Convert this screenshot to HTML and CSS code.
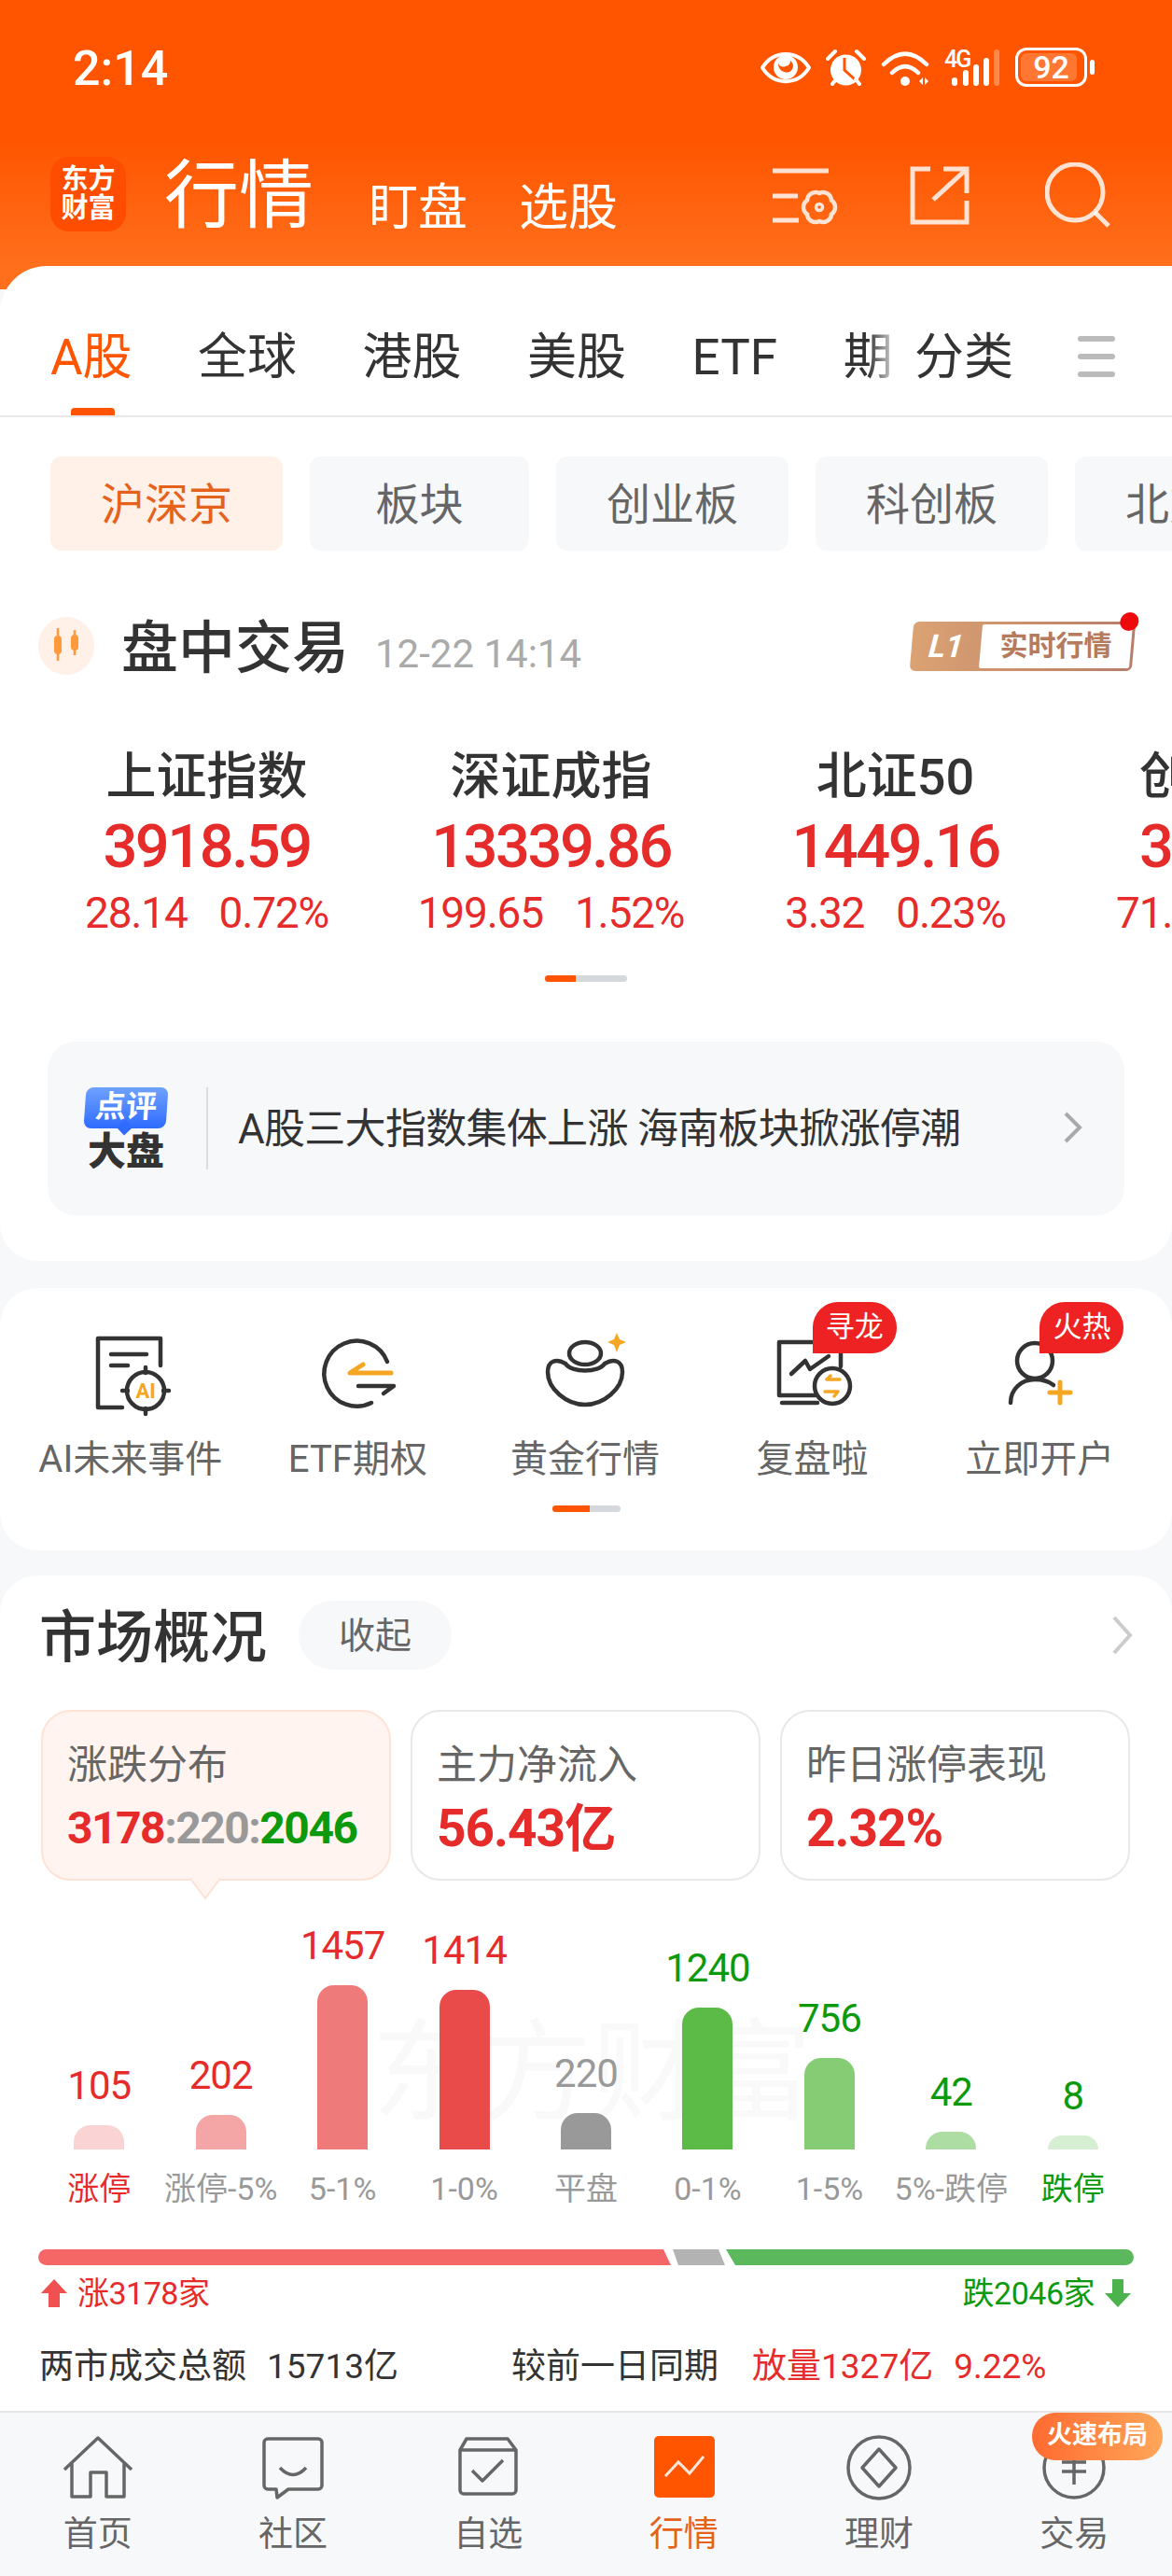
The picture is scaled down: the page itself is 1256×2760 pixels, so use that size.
FILE: index.html
```html
<!DOCTYPE html>
<html lang="zh-CN">
<head>
    <meta charset="UTF-8">
    <title>行情</title>
    <link rel="stylesheet" href="styles.css">
</head>
<body>
    <div class="phone">
        <header class="top">
            <div class="status-bar">
                <span class="clock">2:14</span>
                <div class="status-icons">
                    <svg class="si-eye" viewBox="0 0 54 37"><path d="M2 18.5C14 -1 40 -1 52 18.5C40 38 14 38 2 18.5Z" fill="none" stroke="#fff" stroke-width="4"/><circle cx="27" cy="18" r="13" fill="#fff"/><path d="M19 14a9 9 0 0 0 12 9a7 7 0 0 0 1 -12a6 6 0 0 1 -5 6a6 6 0 0 1 -8 -3Z" fill="#ff5500"/></svg>
                    <svg class="si-alarm" viewBox="0 0 43 40"><circle cx="21.5" cy="23" r="16.5" fill="#fff"/><path d="M20 10V23L31 33" fill="none" stroke="#ff5500" stroke-width="3"/><path d="M2 11L10 3M41 11L33 3M7 38L11 33M36 38L32 33" fill="none" stroke="#fff" stroke-width="4" stroke-linecap="round"/></svg>
                    <svg class="si-wifi" viewBox="0 0 52 40"><path d="M3 17Q26 -6 49 17M12 26Q26 12 40 26" fill="none" stroke="#fff" stroke-width="4.5" stroke-linecap="round"/><circle cx="26" cy="35" r="5" fill="#fff"/><path d="M41 35L45 31V39ZM47 31L51 35L47 39Z" fill="#fff"/></svg>
                    <svg class="si-signal" viewBox="0 0 59 40"><text x="0" y="20" class="si-4g">4G</text><rect x="8" y="31" width="6" height="9" rx="3" fill="#fff"/><rect x="20" y="23" width="6" height="17" rx="3" fill="#fff"/><rect x="31" y="17" width="6" height="23" rx="3" fill="#fff"/><rect x="42" y="10" width="6" height="30" rx="3" fill="#fff"/><rect x="53" y="1" width="6" height="39" rx="3" fill="#fff" opacity=".3"/></svg>
                    <div class="battery"><span class="battery-fill"></span><span class="battery-num">92</span></div>
                </div>
            </div>
            <div class="nav-row">
                <div class="logo">东方<br>财富</div>
                <h1 class="page-title">行情</h1>
                <span class="nav-link nav-first">盯盘</span>
                <span class="nav-link">选股</span>
                <div class="nav-actions">
                    <svg class="na-gear" viewBox="0 0 70 64"><path d="M0 4H60M0 31H27M0 57H28" stroke-width="5"/><path d="M50 28A9 9 0 0 1 63 35.5A9 9 0 0 1 63 50.5A9 9 0 0 1 50 58A9 9 0 0 1 37 50.5A9 9 0 0 1 37 35.5A9 9 0 0 1 50 28Z" stroke-width="4.5"/><circle cx="50" cy="43" r="3.5" stroke-width="3.5"/></svg>
                    <svg class="na-share" viewBox="0 0 64 64"><path d="M22 4H3V61H61V38M36 4H61V30M61 4L25 37" stroke-width="5"/></svg>
                    <svg class="na-search" viewBox="0 0 70 70"><circle cx="32" cy="32" r="30" stroke-width="5"/><path d="M53 53L68 68" stroke-width="5"/></svg>
                </div>
            </div>
        </header>

        <section class="card card-quotes">
            <div class="tabs">
                <div class="tabs-scroll">
                    <span class="tab tab-on">A股</span>
                    <span class="tab">全球</span>
                    <span class="tab">港股</span>
                    <span class="tab">美股</span>
                    <span class="tab">ETF</span>
                    <span class="tab">期</span>
                </div>
                <div class="tabs-end">
                    <span class="tab">分类</span>
                    <span class="tabs-menu"><i></i><i></i><i></i></span>
                </div>
            </div>

            <div class="subtabs">
                <span class="subtab subtab-on">沪深京</span>
                <span class="subtab subtab-short">板块</span>
                <span class="subtab">创业板</span>
                <span class="subtab">科创板</span>
                <span class="subtab">北交所</span>
            </div>

            <div class="trade-head">
                <svg class="candle-icon" viewBox="0 0 60 62"><ellipse cx="30" cy="31" rx="30" ry="31" fill="#fff0e8"/><path d="M21 12V47M39 14V41" stroke="#ff9a3c" stroke-width="2.5"/><rect x="17" y="20" width="8" height="20" rx="4" fill="#ff9a3c"/><rect x="35" y="19" width="8" height="17" rx="4" fill="#ff9a3c"/></svg>
                <h2 class="trade-title">盘中交易</h2>
                <span class="trade-time">12-22 14:14</span>
                <div class="l1-badge">
                    <span class="l1-left"><b>L1</b></span>
                    <span class="l1-right"><b>实时行情</b></span>
                    <i class="l1-dot"></i>
                </div>
            </div>

            <div class="indexes">
                <div class="index">
                    <div class="index-name">上证指数</div>
                    <div class="index-value">3918.59</div>
                    <div class="index-change"><span>28.14</span><span>0.72%</span></div>
                </div>
                <div class="index">
                    <div class="index-name">深证成指</div>
                    <div class="index-value">13339.86</div>
                    <div class="index-change"><span>199.65</span><span>1.52%</span></div>
                </div>
                <div class="index">
                    <div class="index-name">北证50</div>
                    <div class="index-value">1449.16</div>
                    <div class="index-change"><span>3.32</span><span>0.23%</span></div>
                </div>
                <div class="index index-cut">
                    <div class="index-name">创业板指</div>
                    <div class="index-value">3</div>
                    <div class="index-change index-change-cut"><span>71.</span></div>
                </div>
            </div>
            <div class="pager pager-wide"><i></i></div>

            <div class="comment">
                <div class="comment-logo">
                    <span class="comment-bubble"><b>点评</b></span>
                    <span class="comment-big">大盘</span>
                </div>
                <span class="comment-text">A股三大指数集体上涨 海南板块掀涨停潮</span>
                <svg class="comment-arrow" viewBox="0 0 22 36"><path d="M3 3L18 18L3 33" fill="none" stroke="#aaa" stroke-width="4"/></svg>
            </div>
        </section>

        <section class="card card-shortcuts">
            <div class="shortcuts">
                <div class="shortcut">
                    <svg viewBox="0 0 90 90" class="sc-icon"><path d="M36 80H10V6H77V35M24 23H62M24 35H42" class="ln"/><circle cx="61" cy="62" r="20" class="ln"/><path d="M61 37V43M61 81V87M36 62H42M80 62H86" class="ln"/><text x="61" y="70" class="sc-ai">AI</text></svg>
                    <span class="shortcut-label">AI未来事件</span>
                </div>
                <div class="shortcut">
                    <svg viewBox="0 0 90 90" class="sc-icon"><path d="M77 31A35 35 0 1 0 60 75M46 57H84L73 65" class="ln"/><path d="M81 43H37L51 34" class="ln-gold"/></svg>
                    <span class="shortcut-label">ETF期权</span>
                </div>
                <div class="shortcut">
                    <svg viewBox="0 0 90 90" class="sc-icon"><path d="M24 33C14 27 5 30 5 42C5 60 25 77 45 77C65 77 85 60 85 42C85 30 76 27 66 33C60 43 30 43 24 33Z" class="ln"/><ellipse cx="45" cy="22" rx="17" ry="12" class="ln"/><path d="M79 0L82 7L89 10L82 13L79 21L76 13L69 10L76 7Z" fill="#f5a623"/></svg>
                    <span class="shortcut-label">黄金行情</span>
                </div>
                <div class="shortcut">
                    <svg viewBox="0 0 90 90" class="sc-icon"><path d="M48 67H9V10H75V36M12 75H50M22 44L37 30L42 39L62 25" class="ln"/><circle cx="66" cy="57" r="19" class="ln"/><path d="M74 50H60L64 46M58 63H72L68 68" class="ln-gold ln-thin"/></svg>
                    <span class="shortcut-label">复盘啦</span>
                    <span class="flag">寻龙</span>
                </div>
                <div class="shortcut">
                    <svg viewBox="0 0 90 90" class="sc-icon"><circle cx="40" cy="30" r="19" class="ln"/><path d="M14 75C14 60 26 50 40 50C48 50 55 52 60 56" class="ln"/><path d="M67 53V75M56 64H78" class="ln-gold"/></svg>
                    <span class="shortcut-label">立即开户</span>
                    <span class="flag">火热</span>
                </div>
            </div>
            <div class="pager pager-small"><i></i></div>
        </section>

        <section class="card card-market">
            <div class="market-head">
                <h2 class="market-title">市场概况</h2>
                <span class="collapse">收起</span>
                <svg class="market-arrow" viewBox="0 0 24 44"><path d="M3 3L20 22L3 41" fill="none" stroke="#ccc" stroke-width="4"/></svg>
            </div>

            <div class="stats">
                <div class="stat stat-on">
                    <div class="stat-label">涨跌分布</div>
                    <div class="stat-value"><span class="red">3178</span><span class="grey">:220:</span><span class="green">2046</span></div>
                </div>
                <div class="stat">
                    <div class="stat-label">主力净流入</div>
                    <div class="stat-value stat-value-big"><span class="red">56.43亿</span></div>
                </div>
                <div class="stat">
                    <div class="stat-label">昨日涨停表现</div>
                    <div class="stat-value stat-value-big"><span class="red">2.32%</span></div>
                </div>
            </div>

            <div class="chart">
                <div class="chart-mark">东方财富</div>
                <div class="chart-col"><span class="chart-num red">105</span><i class="bar" style="height:26px;background:#fad4d4"></i></div>
                <div class="chart-col"><span class="chart-num red">202</span><i class="bar" style="height:37px;background:#f4a5a5"></i></div>
                <div class="chart-col"><span class="chart-num red">1457</span><i class="bar" style="height:176px;background:#ef7a7a"></i></div>
                <div class="chart-col"><span class="chart-num red">1414</span><i class="bar" style="height:171px;background:#e94b4b"></i></div>
                <div class="chart-col"><span class="chart-num grey">220</span><i class="bar" style="height:39px;background:#999"></i></div>
                <div class="chart-col"><span class="chart-num green">1240</span><i class="bar" style="height:152px;background:#5cba47"></i></div>
                <div class="chart-col"><span class="chart-num green">756</span><i class="bar" style="height:98px;background:#85cc75"></i></div>
                <div class="chart-col"><span class="chart-num green">42</span><i class="bar" style="height:19px;background:#aedda3"></i></div>
                <div class="chart-col"><span class="chart-num green">8</span><i class="bar" style="height:15px;background:#d6eed1"></i></div>
            </div>
            <div class="chart-labels">
                <span class="red">涨停</span>
                <span>涨停-5%</span>
                <span>5-1%</span>
                <span>1-0%</span>
                <span>平盘</span>
                <span>0-1%</span>
                <span>1-5%</span>
                <span>5%-跌停</span>
                <span class="green">跌停</span>
            </div>

            <div class="ratio">
                <i class="ratio-up"></i>
                <i class="ratio-flat"></i>
                <i class="ratio-down"></i>
            </div>
            <div class="ratio-legend">
                <span class="legend-item red">
                    <svg viewBox="0 0 30 30" class="legend-arrow"><path d="M15 0L29 15H21V30H9V15H1Z" fill="#f05050"/></svg>
                    涨3178家
                </span>
                <span class="legend-item green">
                    跌2046家
                    <svg viewBox="0 0 30 30" class="legend-arrow"><path d="M9 0H21V15H29L15 30L1 15H9Z" fill="#4cb24c"/></svg>
                </span>
            </div>

            <div class="summary">
                <span class="summary-left"><span>两市成交总额</span><span class="summary-num">15713亿</span></span>
                <span>较前一日同期</span>
                <span class="red summary-vol">放量1327亿</span>
                <span class="red summary-num">9.22%</span>
            </div>
        </section>

        <nav class="tabbar">
            <div class="tabbar-item">
                <svg viewBox="0 0 76 70" class="tb-icon"><path d="M2 37L38 3L74 37M10 29V66H30V40H47V66H66V29" class="tb-ln"/></svg>
                <span>首页</span>
            </div>
            <div class="tabbar-item">
                <svg viewBox="0 0 70 70" class="tb-icon"><path d="M17 58H8A4 4 0 0 1 4 54V8A4 4 0 0 1 8 4H62A4 4 0 0 1 66 8V54A4 4 0 0 1 62 58H30L18 67Z" class="tb-ln"/><path d="M21 35Q35 50 49 35" class="tb-ln"/></svg>
                <span>社区</span>
            </div>
            <div class="tabbar-item">
                <svg viewBox="0 0 70 70" class="tb-icon"><path d="M5 16L12 4H56L65 16V59A4 4 0 0 1 61 63H9A4 4 0 0 1 5 59ZM5 16H65M18 38L29 49L51 27" class="tb-ln"/></svg>
                <span>自选</span>
            </div>
            <div class="tabbar-item tabbar-on">
                <svg viewBox="0 0 70 70" class="tb-icon"><rect x="3" y="1" width="65" height="66" rx="5" fill="#ff5500"/><path d="M15 44L29 29L41 41L56 23" fill="none" stroke="#ffe6d8" stroke-width="3"/></svg>
                <span>行情</span>
            </div>
            <div class="tabbar-item">
                <svg viewBox="0 0 70 70" class="tb-icon"><circle cx="35" cy="35" r="33" class="tb-ln"/><path d="M35 15L53 35L35 55L17 35Z" class="tb-ln"/></svg>
                <span>理财</span>
            </div>
            <div class="tabbar-item">
                <svg viewBox="0 0 70 70" class="tb-icon"><circle cx="35" cy="35" r="32" class="tb-ln"/><path d="M22 29H48M22 39H48M35 26V53" class="tb-ln"/></svg>
                <span>交易</span>
            </div>
            <span class="promo">火速布局</span>
        </nav>
    </div>
</body>
</html>
```

FILE: styles.css
```css
* {
    box-sizing: border-box;
}

body {
    margin: 0;
    background: #f7f8fa;
    font-family: Roboto, "Noto Sans CJK SC", sans-serif;
    color: #333;
}

h1, h2 {
    margin: 0;
}

.phone {
    width: 1256px;
    height: 2760px;
    overflow: hidden;
    position: relative;
    background: #f7f8fa;
}

.red { color: #e62b2b; }
.green { color: #0c9a0c; }
.grey { color: #999; }

/* orange top */
.top {
    height: 310px;
    margin-bottom: -25px;
    background: linear-gradient(180deg, #ff5500 0, #ff5500 150px, #ff6f1c 285px);
    color: #fff;
}

.status-bar {
    height: 146px;
    display: flex;
    align-items: center;
    padding: 0 91px 0 78px;
}

.clock {
    font-size: 52px;
    font-weight: 500;
}

.status-icons {
    margin-left: auto;
    display: flex;
    align-items: center;
    margin-top: -2px;
}

.si-eye { width: 54px; height: 37px; margin-right: 16px; }
.si-alarm { width: 43px; height: 40px; margin-right: 16px; }
.si-wifi { width: 52px; height: 40px; margin-right: 16px; }
.si-signal { width: 59px; height: 40px; margin-right: 17px; overflow: visible; }

.si-4g {
    font-size: 25px;
    font-weight: 500;
    fill: #fff;
    letter-spacing: -2px;
}

.battery {
    width: 77px;
    height: 42px;
    border: 3px solid #fff;
    border-radius: 12px;
    position: relative;
    padding: 3px;
}

.battery-fill {
    display: block;
    height: 100%;
    width: 92%;
    background: rgba(255, 255, 255, 0.2);
    border-radius: 6px;
}

.battery-num {
    position: absolute;
    inset: 0;
    text-align: center;
    line-height: 36px;
    font-size: 34px;
    font-weight: 500;
}

.battery::after {
    content: "";
    position: absolute;
    right: -11px;
    top: 10px;
    width: 5px;
    height: 16px;
    border-radius: 3px;
    background: #fff;
}

.nav-row {
    height: 104px;
    padding: 22px 0 0 54px;
    display: flex;
    align-items: flex-start;
}

.logo {
    width: 81px;
    height: 80px;
    border-radius: 20px;
    background: #ff4d00;
    font-size: 29px;
    font-weight: 700;
    line-height: 31px;
    text-align: center;
    padding-top: 9px;
}

.page-title {
    margin-left: 41px;
    font-size: 80px;
    font-weight: 400;
    line-height: 90px;
    margin-top: -3px;
    width: 176px;
    white-space: nowrap;
}

.nav-link {
    font-size: 53px;
    line-height: 60px;
    margin-top: 25px;
    margin-left: 55px;
}

.nav-first {
    margin-left: 43px;
}

.nav-actions {
    margin-left: auto;
    display: flex;
    align-items: flex-start;
    padding-right: 66px;
}

.nav-actions svg {
    fill: none;
    stroke: rgba(255, 255, 255, 0.82);
}

.na-gear { width: 70px; height: 64px; margin: 11px 77px 0 0; }
.na-share { width: 64px; height: 64px; margin: 9px 81px 0 0; }
.na-search { width: 70px; height: 70px; margin-top: 6px; }

.card {
    background: #fff;
    border-radius: 40px;
}

/* quotes card */
.card-quotes {
    height: 1066px;
    border-radius: 50px 50px 40px 40px;
    position: relative;
}

.tabs {
    height: 162px;
    border-bottom: 2px solid #e8e8e8;
    display: flex;
}

.tabs-scroll {
    display: flex;
    gap: 70.5px;
    padding-left: 54px;
    width: 980px;
    flex-shrink: 0;
}

.tab {
    font-size: 53px;
    line-height: 60px;
    margin-top: 68px;
    height: 94px;
    position: relative;
    white-space: nowrap;
    flex-shrink: 0;
}

.tab-on {
    color: #ff5500;
}

.tab-on::after {
    content: "";
    position: absolute;
    left: 22px;
    bottom: 2px;
    width: 47px;
    height: 8px;
    border-radius: 4px 4px 0 0;
    background: #ff5500;
}

.tabs-end {
    flex: 1;
    display: flex;
    background: #fff;
    position: relative;
}

.tabs-end::before {
    content: "";
    position: absolute;
    left: -50px;
    top: 0;
    bottom: 2px;
    width: 50px;
    background: linear-gradient(90deg, rgba(255, 255, 255, 0), #fff 70%);
}

.tabs-menu {
    margin: 75px 0 0 69px;
    width: 40px;
    display: flex;
    flex-direction: column;
    gap: 13px;
}

.tabs-menu i {
    height: 6px;
    border-radius: 3px;
    background: #bbb;
}

.subtabs {
    display: flex;
    gap: 29px;
    margin-top: 42px;
    padding-left: 54px;
}

.subtab {
    height: 101px;
    padding: 0 54px;
    flex-shrink: 0;
    background: #f7f8fa;
    border-radius: 12px;
    font-size: 47px;
    line-height: 103px;
    color: #666;
}

.subtab-short {
    padding: 0 70.5px;
}

.subtab-on {
    background: #fff0e8;
    color: #e4621c;
}

.trade-head {
    margin-top: 71px;
    padding: 0 41px;
    height: 62px;
    display: flex;
    align-items: center;
}

.candle-icon {
    width: 60px;
    height: 62px;
}

.trade-title {
    margin: 5px 0 0 29px;
    font-size: 61px;
    font-weight: 500;
    line-height: 62px;
}

.trade-time {
    margin: 17px 0 0 28px;
    font-size: 42px;
    color: #aaa;
}

.l1-badge {
    margin-left: auto;
    width: 238px;
    height: 53px;
    display: flex;
    position: relative;
    transform: skewX(-5deg);
    border-radius: 6px;
    background: linear-gradient(90deg, #dba273, #b67e68);
    padding: 3px 3px 3px 0;
}

.l1-left {
    width: 74px;
    text-align: center;
    color: #fff;
    font-size: 34px;
    line-height: 46px;
    font-style: italic;
}

.l1-right {
    flex: 1;
    background: #fff;
    border-radius: 2px;
    color: #b67a5c;
    font-size: 30px;
    line-height: 46px;
    text-align: center;
}

.l1-right b {
    display: block;
    transform: skewX(5deg);
}

.l1-dot {
    position: absolute;
    right: -3px;
    top: -10px;
    width: 20px;
    height: 20px;
    border-radius: 50%;
    background: #ee0a0a;
}

.indexes {
    margin-top: 80px;
    padding-left: 37px;
    display: flex;
}

.index {
    width: 369px;
    flex-shrink: 0;
    text-align: center;
}

.index-name {
    font-size: 54px;
    font-weight: 500;
    line-height: 60px;
}

.index-value {
    margin-top: 9px;
    font-size: 65px;
    font-weight: 500;
    line-height: 70px;
    color: #e62b2b;
    letter-spacing: -2.5px;
}

.index-change {
    margin-top: 11px;
    font-size: 46px;
    line-height: 50px;
    color: #e62b2b;
    display: flex;
    justify-content: center;
    gap: 34px;
    letter-spacing: -1.2px;
}

.index-cut {
    text-align: left;
    padding-left: 77px;
}

.index-change-cut {
    justify-content: flex-start;
    margin-left: -25px;
}

.pager {
    margin: 0 auto;
    background: #d5d8dc;
    border-radius: 4px;
    overflow: hidden;
}

.pager i {
    display: block;
    height: 100%;
    background: #ff5500;
}

.pager-wide {
    width: 88px;
    height: 7px;
    margin-top: 42px;
    margin-bottom: 64px;
}

.pager-wide i {
    width: 33px;
}

.comment {
    height: 186px;
    margin: 0 51px;
    border-radius: 30px;
    background: #f7f8fa;
    display: flex;
    align-items: center;
    position: relative;
    padding-left: 39px;
}

.comment-logo {
    width: 90px;
    display: flex;
    flex-direction: column;
    align-items: center;
}

.comment-bubble {
    width: 88px;
    height: 44px;
    border-radius: 8px;
    background: linear-gradient(180deg, #6fa2ff, #2f6bff);
    color: #fff;
    font-size: 33px;
    line-height: 42px;
    text-align: center;
    transform: skewX(-4deg);
    position: relative;
}

.comment-bubble::after {
    content: "";
    position: absolute;
    left: 38px;
    bottom: -5px;
    width: 12px;
    height: 12px;
    background: #2f6bff;
    transform: rotate(45deg);
    z-index: -1;
}

.comment-big {
    margin-top: 6px;
    font-size: 41px;
    font-weight: 900;
    line-height: 38px;
}

.comment-text {
    margin-left: 41px;
    padding-left: 32px;
    border-left: 2px solid #ddd;
    height: 88px;
    line-height: 90px;
    font-size: 44px;
    white-space: nowrap;
    letter-spacing: -0.7px;
}

.comment-arrow {
    position: absolute;
    left: 1088px;
    top: 74px;
    width: 22px;
    height: 36px;
}

/* shortcuts */
.card-shortcuts {
    height: 281px;
    margin-top: 29px;
}

.shortcuts {
    display: grid;
    grid-template-columns: repeat(5, 1fr);
    padding: 48px 20px 0 18px;
}

.shortcut {
    position: relative;
    display: flex;
    flex-direction: column;
    align-items: center;
}

.sc-icon {
    width: 90px;
    height: 90px;
}

.ln, .ln-gold {
    fill: none;
    stroke: #333;
    stroke-width: 4.5;
    stroke-linecap: round;
    stroke-linejoin: round;
}

.ln-gold {
    stroke: #f5a623;
    stroke-width: 5;
}

.ln-thin {
    stroke-width: 3.5;
}

.sc-ai {
    font-size: 22px;
    font-weight: 700;
    fill: #f5a623;
    text-anchor: middle;
}

.shortcut-label {
    margin-top: 21px;
    font-size: 40px;
    line-height: 50px;
    color: #666;
    white-space: nowrap;
}

.flag {
    position: absolute;
    top: -33px;
    left: 122px;
    width: 90px;
    height: 55px;
    border-radius: 27px 27px 27px 0;
    background: #ee2222;
    color: #fff;
    font-size: 31px;
    line-height: 53px;
    text-align: center;
}

.pager-small {
    width: 73px;
    height: 7px;
    margin-top: 24px;
}

.pager-small i {
    width: 40px;
}

/* market */
.card-market {
    height: 895px;
    margin-top: 27px;
    border-radius: 40px 40px 0 0;
    padding-top: 27px;
    position: relative;
}

.market-head {
    height: 74px;
    padding: 0 41px 0 42px;
    display: flex;
    align-items: center;
}

.market-title {
    font-size: 61px;
    font-weight: 500;
    line-height: 74px;
    padding-top: 5px;
}

.collapse {
    margin-left: 34px;
    width: 164px;
    height: 74px;
    border-radius: 37px;
    background: #f7f8fa;
    color: #666;
    font-size: 39px;
    line-height: 76px;
    text-align: center;
}

.market-arrow {
    margin-left: auto;
    width: 24px;
    height: 44px;
}

.stats {
    margin-top: 43px;
    padding: 0 45px 0 44px;
    display: grid;
    grid-template-columns: repeat(3, 1fr);
    gap: 21px;
}

.stat {
    height: 183px;
    border: 2px solid #e8e8e8;
    border-radius: 32px;
    padding: 31px 0 0 26px;
    position: relative;
}

.stat-on {
    background: #fff4f0;
    border-color: #fde3d6;
}

.stat-on::after {
    content: "";
    position: absolute;
    left: 160px;
    bottom: -14px;
    width: 26px;
    height: 26px;
    background: #fff4f0;
    border-right: 2px solid #fde3d6;
    border-bottom: 2px solid #fde3d6;
    transform: rotate(45deg) skew(8deg, 8deg);
}

.stat-label {
    font-size: 43px;
    line-height: 52px;
    color: #666;
}

.stat-value {
    margin-top: 14px;
    font-size: 48px;
    font-weight: 700;
    line-height: 56px;
    letter-spacing: -1.5px;
    white-space: nowrap;
}

.stat-value-big {
    font-size: 55px;
    letter-spacing: -1px;
}

.chart {
    height: 288px;
    padding: 0 41px;
    display: grid;
    grid-template-columns: repeat(9, 1fr);
    position: relative;
}

.chart-mark {
    position: absolute;
    left: 398px;
    bottom: 16px;
    font-size: 118px;
    line-height: 130px;
    color: #f9f9f9;
    white-space: nowrap;
}

.chart-col {
    position: relative;
    display: flex;
    flex-direction: column;
    justify-content: flex-end;
    align-items: center;
}

.chart-num {
    font-size: 42px;
    line-height: 50px;
    margin-bottom: 17px;
    letter-spacing: -1px;
}

.bar {
    display: block;
    width: 54px;
    border-radius: 18px 18px 0 0;
}

.chart-labels {
    margin-top: 22px;
    padding: 0 41px;
    display: grid;
    grid-template-columns: repeat(9, 1fr);
    font-size: 34px;
    line-height: 40px;
    color: #999;
    text-align: center;
    white-space: nowrap;
}

.ratio {
    margin: 45px 41px 0;
    height: 17px;
    display: flex;
    border-radius: 9px;
    overflow: hidden;
}

.ratio i {
    display: block;
    height: 100%;
}

.ratio-up {
    width: 678px;
    background: #f56767;
    clip-path: polygon(0 0, calc(100% - 8px) 0, 100% 100%, 0 100%);
}

.ratio-flat {
    width: 56px;
    margin-left: 2px;
    background: #b3b3b3;
    clip-path: polygon(0 0, calc(100% - 7px) 0, 100% 100%, 6px 100%);
}

.ratio-down {
    flex: 1;
    margin-left: 1px;
    background: #5cb85c;
    clip-path: polygon(0 0, 100% 0, 100% 100%, 10px 100%);
}

.ratio-legend {
    margin-top: 10px;
    padding: 0 43px;
    display: flex;
    justify-content: space-between;
    font-size: 34px;
    line-height: 40px;
}

.legend-item {
    display: flex;
    align-items: center;
    gap: 10px;
    letter-spacing: -0.5px;
}

.legend-arrow {
    width: 30px;
    height: 30px;
}

.summary {
    margin-top: 34px;
    padding-left: 42px;
    display: flex;
    font-size: 37px;
    line-height: 50px;
    white-space: nowrap;
}

.summary-left {
    width: 506px;
}

.summary-num {
    margin-left: 22px;
}

.summary-vol {
    margin-left: 36px;
}

/* bottom bar */
.tabbar {
    height: 177px;
    border-top: 2px solid #e6e6e6;
    background: #f7f8fa;
    display: grid;
    grid-template-columns: repeat(6, 1fr);
    position: relative;
}

.tabbar-item {
    padding-top: 24px;
    display: flex;
    flex-direction: column;
    align-items: center;
    font-size: 37px;
    line-height: 44px;
    color: #666;
}

.tabbar-on {
    color: #e4621c;
}

.tb-icon {
    height: 70px;
    margin-bottom: 15px;
}

.tb-ln {
    fill: none;
    stroke: #666;
    stroke-width: 3.5;
    stroke-linejoin: round;
}

.promo {
    position: absolute;
    left: 1106px;
    top: 0;
    width: 140px;
    height: 51px;
    border-radius: 25px;
    background: linear-gradient(90deg, #ff6a30, #ffa75a);
    color: #fff;
    font-size: 27px;
    font-weight: 700;
    line-height: 49px;
    text-align: center;
    white-space: nowrap;
}
```
